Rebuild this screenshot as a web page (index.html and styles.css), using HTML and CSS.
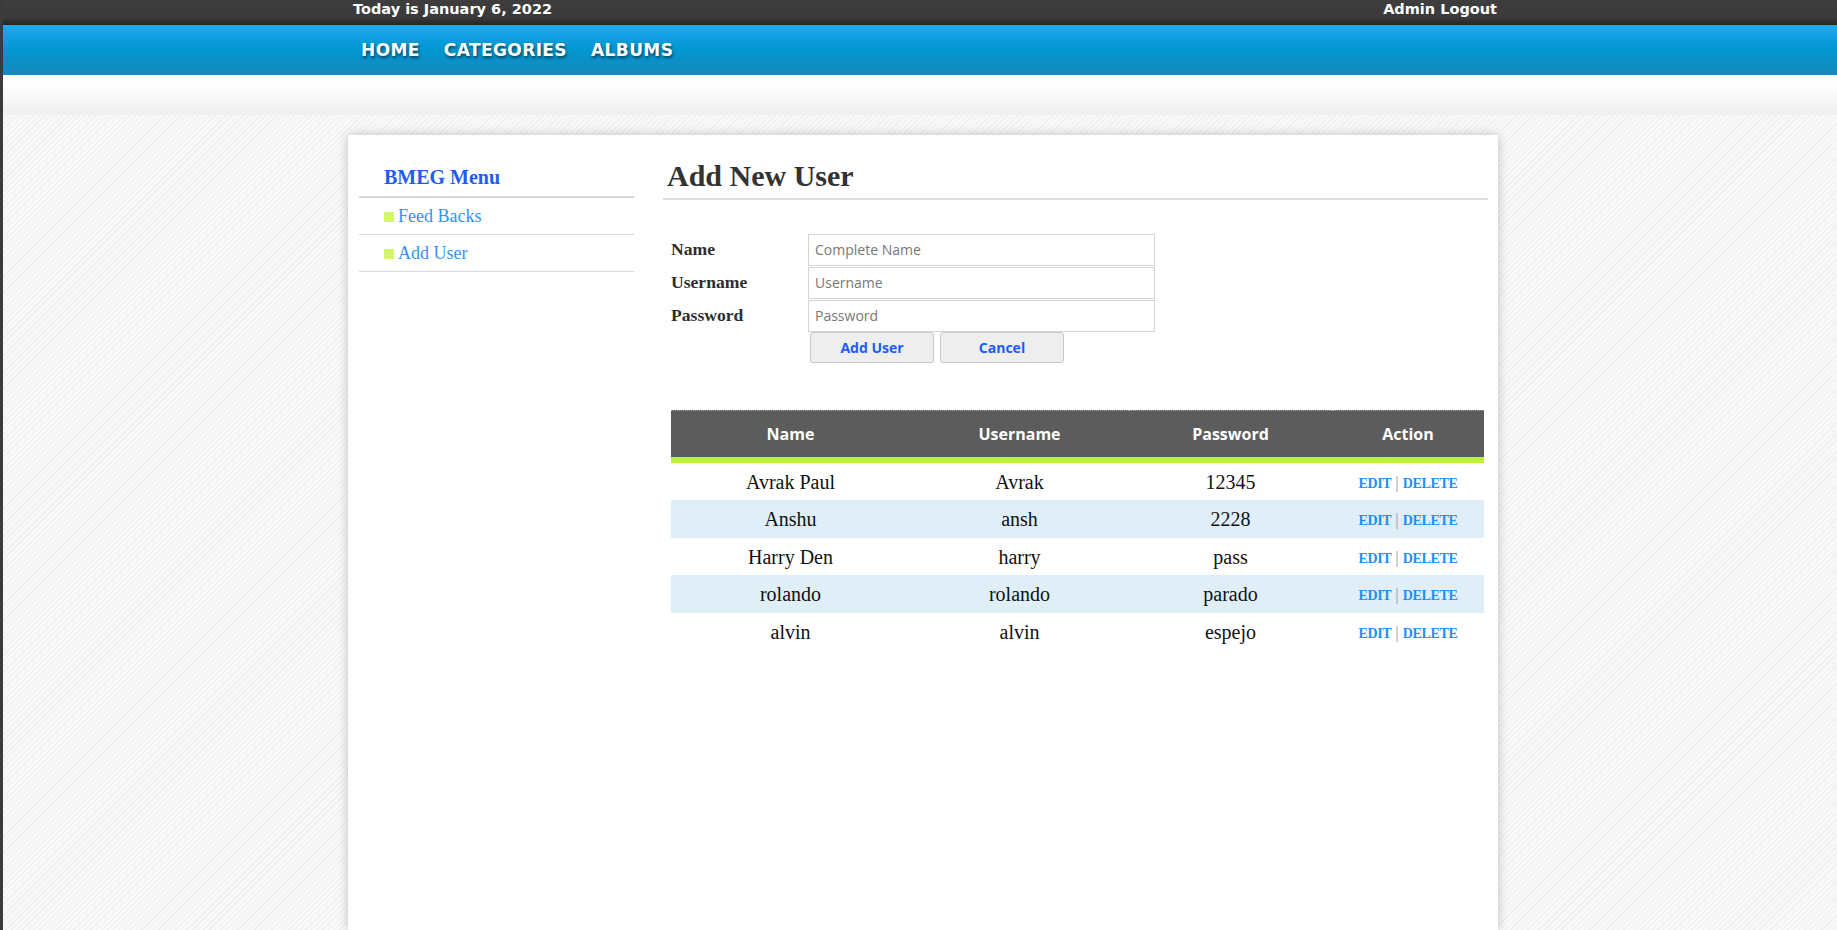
FILE: index.html
```html
<!DOCTYPE html>
<html lang="en">
<head>
<meta charset="utf-8">
<title>Add New User</title>
<link rel="stylesheet" href="styles.css">
</head>
<body>
<header class="topbar">
  <div class="wrap topbar-inner">
    <span class="today">Today is January 6, 2022</span>
    <a class="admin" href="#">Admin Logout</a>
  </div>
</header>
<nav class="navbar">
  <div class="wrap nav-inner">
    <a href="#">HOME</a>
    <a href="#">CATEGORIES</a>
    <a href="#">ALBUMS</a>
  </div>
</nav>
<div class="subband"></div>
<main class="page">
  <div class="wrap card">
    <aside class="sidebar">
      <h3 class="side-title">BMEG Menu</h3>
      <ul class="side-menu">
        <li><span class="bullet"></span><a href="#">Feed Backs</a></li>
        <li><span class="bullet"></span><a href="#">Add User</a></li>
      </ul>
    </aside>
    <section class="content">
      <h2 class="page-title">Add New User</h2>
      <form class="user-form">
        <label class="form-label" for="fname">Name</label>
        <input class="form-input" id="fname" type="text" placeholder="Complete Name">
        <label class="form-label" for="uname">Username</label>
        <input class="form-input" id="uname" type="text" placeholder="Username">
        <label class="form-label" for="pword">Password</label>
        <input class="form-input" id="pword" type="text" placeholder="Password">
        <span></span>
        <div class="form-buttons">
          <button type="button" class="btn">Add User</button>
          <button type="button" class="btn">Cancel</button>
        </div>
      </form>
      <table class="users">
        <colgroup>
          <col class="c1"><col class="c2"><col class="c3"><col class="c4">
        </colgroup>
        <thead>
          <tr><th>Name</th><th>Username</th><th>Password</th><th>Action</th></tr>
        </thead>
        <tbody>
          <tr><td>Avrak Paul</td><td>Avrak</td><td>12345</td><td class="act"><a href="#">EDIT</a> <span class="sep">|</span> <a href="#">DELETE</a></td></tr>
          <tr class="alt"><td>Anshu</td><td>ansh</td><td>2228</td><td class="act"><a href="#">EDIT</a> <span class="sep">|</span> <a href="#">DELETE</a></td></tr>
          <tr><td>Harry Den</td><td>harry</td><td>pass</td><td class="act"><a href="#">EDIT</a> <span class="sep">|</span> <a href="#">DELETE</a></td></tr>
          <tr class="alt"><td>rolando</td><td>rolando</td><td>parado</td><td class="act"><a href="#">EDIT</a> <span class="sep">|</span> <a href="#">DELETE</a></td></tr>
          <tr><td>alvin</td><td>alvin</td><td>espejo</td><td class="act"><a href="#">EDIT</a> <span class="sep">|</span> <a href="#">DELETE</a></td></tr>
        </tbody>
      </table>
    </section>
  </div>
</main>
</body>
</html>
```

FILE: styles.css
```css
html {
  background: #3b3b3b;
  height: 100%;
}
body {
  margin: 0 0 0 3px;
  min-height: 100%;
  overflow: hidden;
  font-family: "Liberation Serif", "Times New Roman", serif;
  background-color: #f7f7f7;
  background-image: repeating-linear-gradient(135deg, #f8f8f8 0px, #f8f8f8 3px, #efefef 3px, #efefef 4px);
}
.wrap {
  width: 1150px;
  margin-left: calc(50% - 572px);
  box-sizing: border-box;
}
a { text-decoration: none; }

/* top bar */
.topbar {
  height: 25px;
  background: linear-gradient(to bottom, #3e3e3e 0%, #3a3a3a 70%, #262626 100%);
  font-family: "DejaVu Sans", Verdana, sans-serif;
  font-weight: bold;
  font-size: 14.5px;
  color: #fff;
}
.topbar-inner {
  display: flex;
  justify-content: space-between;
  padding: 1px 1px 0 5px;
}
.topbar .admin { color: #fff; }

/* nav */
.navbar {
  height: 50px;
  background: linear-gradient(to bottom, #24aaf8 0%, #0b9ddb 30%, #0097d0 50%, #0d8fc6 75%, #158ac0 100%);
}
.nav-inner {
  display: flex;
  gap: 24px;
  padding-left: 13px;
}
.nav-inner a {
  font-family: "DejaVu Sans", Verdana, sans-serif;
  font-weight: bold;
  font-size: 17px;
  letter-spacing: 0.4px;
  line-height: 50px;
  color: #fff;
  text-shadow: 1px 2px 3px rgba(0, 0, 0, 0.55);
}

.subband {
  height: 40px;
  background: linear-gradient(to bottom, #ffffff 0%, #fbfbfb 40%, #efefef 100%);
}

/* page */
.page {
  padding-top: 20px;
}
.card {
  background: #fff;
  box-shadow: 0 0 10px rgba(0, 0, 0, 0.22);
  min-height: calc(100vh - 135px);
  display: flex;
  gap: 29px;
  padding: 0 10px 0 11px;
}

/* sidebar */
.sidebar {
  width: 275px;
  flex: none;
  padding-top: 31px;
}
.side-title {
  margin: 0;
  padding: 0 0 7px 25px;
  font-size: 20px;
  line-height: 23px;
  font-weight: bold;
  color: #1f5cf6;
  border-bottom: 2px solid #d8d8d8;
}
.side-menu {
  list-style: none;
  margin: 0;
  padding: 0;
}
.side-menu li {
  padding: 8px 0 7.5px 25px;
  font-size: 18px;
  line-height: 20.7px;
  border-bottom: 1px solid #dadada;
}
.side-menu a { color: #2f95f6; }
.bullet {
  display: inline-block;
  width: 10px;
  height: 10px;
  background: #d3f66a;
  margin-right: 4px;
}

/* content */
.content {
  width: 825px;
  flex: none;
}
.page-title {
  margin: 23.5px 0 0;
  padding: 0 0 5.5px 4px;
  font-size: 30px;
  font-weight: bold;
  color: #333;
  border-bottom: 2px solid #dcdcdc;
}
.user-form {
  margin: 33.5px 0 0 8px;
  display: grid;
  grid-template-columns: 137px 347px;
  row-gap: 1px;
  align-items: center;
}
.form-label {
  font-size: 17.6px;
  font-weight: bold;
  color: #2e2e2e;
}
.form-input {
  height: 32px;
  box-sizing: border-box;
  border: 1px solid #d5d5d5;
  padding: 0 6px;
  margin: 0;
  font-family: "Open Sans", sans-serif;
  font-size: 14px;
  color: #333;
  outline: none;
}
.form-input::placeholder { color: #777; }
.form-buttons {
  display: flex;
  gap: 6px;
  padding-left: 2px;
  margin-top: -1px;
}
.btn {
  width: 124px;
  height: 31px;
  margin: 0;
  border: 1px solid #c9c9c9;
  border-radius: 3px;
  background: #eeeeee;
  color: #1a5cff;
  font-family: "Open Sans", sans-serif;
  font-weight: bold;
  font-size: 14px;
  padding: 0;
}

/* table */
.users {
  margin: 47px 0 0 8px;
  width: 813px;
  border-collapse: separate;
  border-spacing: 0;
  table-layout: fixed;
}
.c1 { width: 239px; }
.c2 { width: 219px; }
.c3 { width: 203px; }
.c4 { width: 152px; }
.users th {
  background: #5c5c5c;
  color: #fff;
  font-family: "Open Sans", sans-serif;
  font-weight: bold;
  font-size: 16px;
  line-height: 22px;
  padding: 12px 0;
  border-top: 1px dotted #a8a8a8;
  border-bottom: 6px solid #bbf23c;
  text-align: center;
}
.users td {
  text-align: center;
  font-size: 20px;
  line-height: 23px;
  height: 37.5px;
  box-sizing: border-box;
  padding: 1.5px 0 0;
  color: #111;
}
.users tr.alt td { background: #e0eef7; }
.users td.act {
  font-size: 16px;
  line-height: 23px;
}
.act a {
  font-size: 14px;
  letter-spacing: -0.35px;
  line-height: 1;
  font-weight: bold;
  color: #1e8ff5;
}
.sep {
  color: #9a9a9a;
  font-size: 17px;
  line-height: 1;
}
```
